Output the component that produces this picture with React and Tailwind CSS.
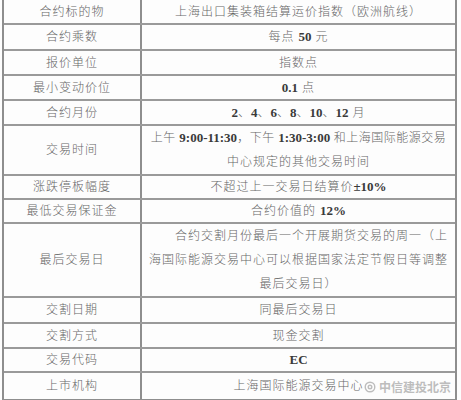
import React from "react";

const FONT = { fontFamily: '"Liberation Serif", "Noto Sans CJK SC", serif' };

function N({ children }) {
  // latin digits are set in a bold Times-like face in the source
  return <span className="font-bold tracking-normal text-[13px] text-[#3a3a3a]">{children}</span>;
}

const ROWS = [
  { h: "h-[25px]", label: "合约标的物", value: <>上海出口集装箱结算运价指数（欧洲航线）</> },
  { h: "h-[26px]", label: "合约乘数", value: <>每点 <N>50</N> 元</> },
  { h: "h-[25px]", label: "报价单位", value: <>指数点</> },
  { h: "h-[25px]", label: "最小变动价位", value: <><N>0.1</N> 点</> },
  { h: "h-[25px]", label: "合约月份", value: <><N>2</N>、<N>4</N>、<N>6</N>、<N>8</N>、<N>10</N>、<N>12</N> 月</> },
  {
    h: "h-[50px]",
    label: "交易时间",
    value: (
      <>
        <div className="whitespace-nowrap tracking-[0.5px]">
          上午 <N>9:00-11:30</N>，下午 <N>1:30-3:00</N> 和上海国际能源交易
        </div>
        <div>中心规定的其他交易时间</div>
      </>
    ),
  },
  { h: "h-[24px]", label: "涨跌停板幅度", value: <>不超过上一交易日结算价<N>±10%</N></> },
  { h: "h-[24px]", label: "最低交易保证金", value: <>合约价值的 <N>12%</N></> },
  {
    h: "h-[74px]",
    label: "最后交易日",
    value: (
      <>
        <div className="whitespace-nowrap indent-[26px]">合约交割月份最后一个开展期货交易的周一（上</div>
        <div className="whitespace-nowrap">海国际能源交易中心可以根据国家法定节假日等调整</div>
        <div>最后交易日）</div>
      </>
    ),
  },
  { h: "h-[26px]", label: "交割日期", value: <>同最后交易日</> },
  { h: "h-[25px]", label: "交割方式", value: <>现金交割</> },
  { h: "h-[24px]", label: "交易代码", value: <N>EC</N> },
  { h: "h-[26px]", label: "上市机构", value: <>上海国际能源交易中心</> },
];

export default function App() {
  return (
    <div className="w-[461px] h-[400px] bg-[#fdfdfd] overflow-hidden" style={FONT}>
      <div className="relative ml-[2px] w-[455px] border-x-2 border-b-2 border-[#8e8e8e] text-[12px] font-light tracking-[1px] text-[#666]">
        {ROWS.map((r, i) => (
          <div
            key={r.label}
            className={`flex ${r.h} ${i < ROWS.length - 1 ? "border-b-2 border-[#9a9a9a]" : ""}`}
          >
            <div className="w-[138px] shrink-0 border-r-2 border-[#8e8e8e] flex items-center justify-center">
              {r.label}
            </div>
            <div className="flex-1 flex items-center justify-center leading-[24px] text-center">
              <div>{r.value}</div>
            </div>
          </div>
        ))}

        <div className="absolute right-[4px] bottom-[3px] flex items-center gap-[3px] text-[12px] tracking-normal text-[#bdbdbd]">
          <svg width="12" height="12" viewBox="0 0 12 12" fill="none" stroke="#bdbdbd" strokeWidth="1.4">
            <circle cx="6" cy="6" r="4.8" />
            <circle cx="6" cy="6" r="1.8" />
          </svg>
          <span className="font-bold" style={{ fontFamily: '"Noto Sans CJK SC", sans-serif' }}>中信建投北京</span>
        </div>
      </div>
    </div>
  );
}
